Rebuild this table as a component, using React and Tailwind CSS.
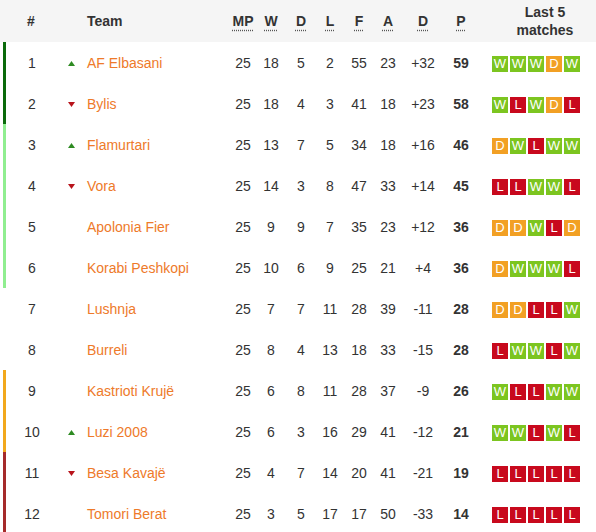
import React from "react";

const rows = [
  [1, "up", "AF Elbasani", 25, 18, 5, 2, 55, 23, "+32", 59, "WWWDW", "border-[#0b6a0b]"],
  [2, "down", "Bylis", 25, 18, 4, 3, 41, 18, "+23", 58, "WLWDL", "border-[#0b6a0b]"],
  [3, "up", "Flamurtari", 25, 13, 7, 5, 34, 18, "+16", 46, "DWLWW", "border-[#90ee90]"],
  [4, "down", "Vora", 25, 14, 3, 8, 47, 33, "+14", 45, "LLWWL", "border-[#90ee90]"],
  [5, "", "Apolonia Fier", 25, 9, 9, 7, 35, 23, "+12", 36, "DDWLD", "border-[#90ee90]"],
  [6, "", "Korabi Peshkopi", 25, 10, 6, 9, 25, 21, "+4", 36, "DWWWL", "border-[#90ee90]"],
  [7, "", "Lushnja", 25, 7, 7, 11, 28, 39, "-11", 28, "DDLLW", "border-transparent"],
  [8, "", "Burreli", 25, 8, 4, 13, 18, 33, "-15", 28, "LWWLW", "border-transparent"],
  [9, "", "Kastrioti Krujë", 25, 6, 8, 11, 28, 37, "-9", 26, "WLLWW", "border-[#f2a81d]"],
  [10, "up", "Luzi 2008", 25, 6, 3, 16, 29, 41, "-12", 21, "WWLWL", "border-[#f2a81d]"],
  [11, "down", "Besa Kavajë", 25, 4, 7, 14, 20, 41, "-21", 19, "LLLLL", "border-[#a52a2a]"],
  [12, "", "Tomori Berat", 25, 3, 5, 17, 17, 50, "-33", 14, "LLLLL", "border-[#a52a2a]"],
];

const badgeColor = {
  W: "bg-[#7cc520]",
  D: "bg-[#f2a024]",
  L: "bg-[#c8091d]",
};

function Arrow({ dir }) {
  if (dir === "up")
    return (
      <svg width="7" height="5" viewBox="0 0 7 5">
        <polygon points="0,5 7,5 3.5,0" fill="#2e8b22" />
      </svg>
    );
  if (dir === "down")
    return (
      <svg width="7" height="5" viewBox="0 0 7 5">
        <polygon points="0,0 7,0 3.5,5" fill="#b8141c" />
      </svg>
    );
  return null;
}

const cols = ["w-[28px]", "w-[28px]", "w-[32px]", "w-[26px]", "w-[32px]", "w-[26px]", "w-[44px]", "w-[32px]"];

export default function App() {
  const heads = ["MP", "W", "D", "L", "F", "A", "D", "P"];
  return (
    <div
      className="w-[596px] h-[532px] overflow-hidden bg-white text-[14px] text-[#333]"
      style={{ fontFamily: '"Liberation Sans", Arial, sans-serif' }}
    >
      <div className="flex h-[42px] items-center bg-[#f5f5f5] font-bold text-[#333]">
        <div className="w-[58px] text-center pl-[4px]">#</div>
        <div className="w-[29px]" />
        <div className="w-[142px]">Team</div>
        {heads.map((h, i) => (
          <div key={i} className={`${cols[i]} text-center`}>
            <span className="underline decoration-dotted decoration-[#555] underline-offset-[4px]">{h}</span>
          </div>
        ))}
        <div className="flex-1 text-center pl-[17px] leading-[18px]">
          Last 5
          <br />
          matches
        </div>
      </div>
      {rows.map((r) => {
        const [pos, dir, team, mp, w, d, l, f, a, gd, p, form, border] = r;
        const vals = [mp, w, d, l, f, a, gd];
        return (
          <div key={pos} className={`flex h-[41px] items-center pt-[2px] ml-[3px] border-l-[3px] ${border}`}>
            <div className="w-[52px] text-center">{pos}</div>
            <div className="w-[26px] flex justify-center">
              <Arrow dir={dir} />
            </div>
            <div className="w-[145px] pl-[3px] text-[#ee7a2a]">{team}</div>
            {vals.map((v, i) => (
              <div key={i} className={`${cols[i]} text-center`}>
                {v}
              </div>
            ))}
            <div className={`${cols[7]} text-center font-bold`}>{p}</div>
            <div className="flex-1 flex justify-center pr-[1px]">
              <div className="flex gap-[2px]">
                {form.split("").map((c, i) => (
                  <div
                    key={i}
                    className={`w-[16px] h-[16px] flex items-center justify-center text-white text-[13px] leading-none ${badgeColor[c]}`}
                  >
                    {c}
                  </div>
                ))}
              </div>
            </div>
          </div>
        );
      })}
    </div>
  );
}
